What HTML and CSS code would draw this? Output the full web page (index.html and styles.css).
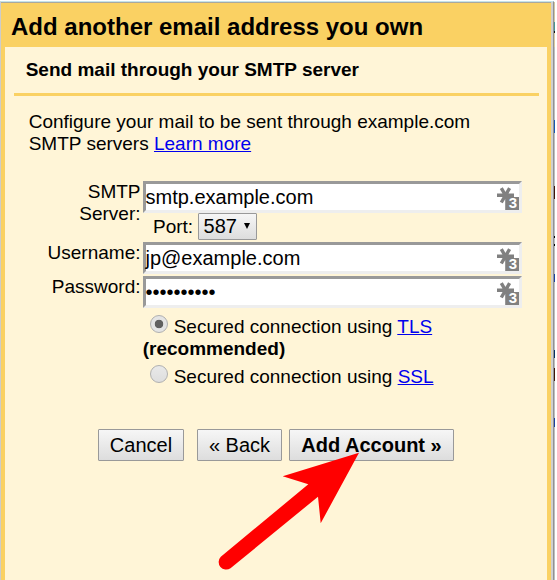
FILE: index.html
```
<!DOCTYPE html>
<html lang="en">
<head>
<meta charset="utf-8">
<title>Add another email address you own</title>
<link rel="stylesheet" href="styles.css">
</head>
<body>
<svg width="0" height="0" class="defs"><defs>
<symbol id="key" viewBox="0 0 22 23"><path d="M0 8.3H17M4.3 1.2L12.6 15.5M12.6 1.2L4.3 15.5" stroke="#808080" stroke-width="3.4" fill="none"/><rect x="8.2" y="10" width="13.8" height="13" fill="#808080"/></symbol>
</defs></svg>
<div class="screen">
<main class="window">
<h1>Add another email address you own</h1>
<section class="panel">
<h2>Send mail through your SMTP server</h2>
<p class="intro">Configure your mail to be sent through example.com<br>SMTP servers <a href="#">Learn more</a></p>
<form>
<div class="row server"><label>SMTP<br>Server:</label><div><div class="input">smtp.example.com<span class="key"><svg><use href="#key"/></svg><b>3</b></span></div><div class="port">Port: <span class="select">587<i></i></span></div></div></div>
<div class="row"><label>Username:</label><div class="input">jp@example.com<span class="key"><svg><use href="#key"/></svg><b>3</b></span></div></div>
<div class="row"><label>Password:</label><div class="input"><span class="password">••••••••••</span><span class="key"><svg><use href="#key"/></svg><b>3</b></span></div></div>
<div class="options">
<div><span class="radio checked"></span>Secured connection using <a href="#">TLS</a></div>
<div class="recommended">(recommended)</div>
<div class="ssl"><span class="radio"></span>Secured connection using <a href="#">SSL</a></div>
</div>
<div class="actions"><button type="button" class="cancel">Cancel</button><button type="button" class="back">« Back</button><button type="button" class="add">Add Account »</button></div>
</form>
</section>
</main>
<div class="behind"></div>
</div>
<svg class="arrow" viewBox="0 0 140 120"><path d="M139 .7L62.7 24.3 88.3 32.3 .8 104.7A7.6 7.6 0 0 0 10.5 116.3L98 44.7 100.7 71.3Z" fill="red"/></svg>
</body>
</html>
```
FILE: styles.css
```
* { box-sizing: border-box; }
body { margin: 0; height: 580px; overflow: hidden; background: #fff; color: #000; font: 19px/22px "Liberation Sans", Arial, sans-serif; }
.defs { position: absolute; }
a { color: #0000ee; text-decoration-thickness: 1px; }
.screen { display: flex; width: 555px; height: 580px; border-top: 1px solid #fff; }
.window { width: 554px; flex: none; border-left: 1px solid #ccc; border-top: 1px solid #c5e3e9; border-right: 1px solid #929292; background: #fad163; box-shadow: inset -2px 0 #d0d0d0, inset 0 1px #a8a8a0; }
h1 { margin: 0; height: 45px; padding: 11px 0 0 10px; font-size: 24px; line-height: 28px; white-space: nowrap; }
.panel { height: 533px; margin: 0 6px 0 4px; padding: 0 8px 0 9px; background: #fff5d7; }
h2 { margin: 0; height: 49px; padding: 12px 0 0 11.7px; border-bottom: 3px solid #fad163; font-size: 19px; line-height: 22px; }
.intro { margin: 0; padding: 15px 0 0 14.7px; height: 85px; white-space: nowrap; }
.row { display: grid; grid-template-columns: 127px 379px; column-gap: 2px; height: 34px; }
.row label { padding-right: .5px; text-align: right; }
.server { height: 61px; }
.input { display: flex; align-items: center; justify-content: space-between; height: 32px; border: 3px solid; border-color: #999 #eee #eee #999; background: #fff; font-size: 20px; text-indent: -.5px; white-space: nowrap; }
.key { position: relative; width: 22px; height: 23px; margin-top: 3px; text-indent: 0; }
.key svg { display: block; width: 22px; height: 23px; }
.key b { position: absolute; right: 2px; top: 9px; color: #fff; font-size: 15px; line-height: 14px; }
.port { display: flex; align-items: center; padding-left: 10px; gap: 5px; height: 27px; }
.select { display: flex; align-items: center; justify-content: space-between; width: 59px; height: 27px; padding: 0 6px 2px 4.4px; border: 1px solid #999; border-radius: 1px; background: linear-gradient(#f6f6f6, #ddd); font-size: 20px; }
.select i { border: 3px solid transparent; border-top: 6px solid #000; border-bottom: 0; }
.options { height: 119px; padding: 6px 0 0 128.7px; }
.options > div { height: 22px; white-space: nowrap; }
.radio { display: inline-block; width: 18px; height: 18px; margin: 0 6px 0 7px; border: 1px solid #b0b0b0; border-radius: 50%; background: linear-gradient(#e9e9e9, #dedede); vertical-align: -1px; transform: translateY(-1px); }
.checked { background: radial-gradient(circle, #606060 0 4px, transparent 4.6px), #e4e4e4; }
.options .recommended { font-weight: bold; height: 28px; }
.actions { display: flex; padding-left: 84px; }
button { height: 32px; padding: 0; border: 1px solid #999; border-radius: 1px; background: linear-gradient(#f6f6f6, #ddd); color: #000; font: 20px/28px "Liberation Sans", Arial, sans-serif; white-space: nowrap; }
.cancel { width: 86px; margin-right: 13px; }
.back { width: 85px; margin-right: 7px; }
.add { width: 165px; font-weight: bold; }
.behind { width: 1px; margin-top: 1px; background: linear-gradient(#d0c6a2 0 20px, #4a9591 20px 29px, #111 29px 31px, #d8caa0 31px 45px, #bebebe 45px 118px, #1858b0 118px 131px, #bebebe 131px 184px, #3e1508 184px 197px, #bebebe 197px 234px, #000 234px 236px, #bebebe 236px 242px, #000 242px 244px, #bebebe 244px 272px, #1b419d 272px 280px, #bebebe 280px 348px, #073061 348px 356px, #bebebe 356px 366px, #3e1508 366px 379px, #bebebe 379px 416px, #1b419d 416px 425px, #bebebe 425px); }
.arrow { position: absolute; left: 220px; top: 452px; width: 140px; height: 120px; overflow: visible; }
```
